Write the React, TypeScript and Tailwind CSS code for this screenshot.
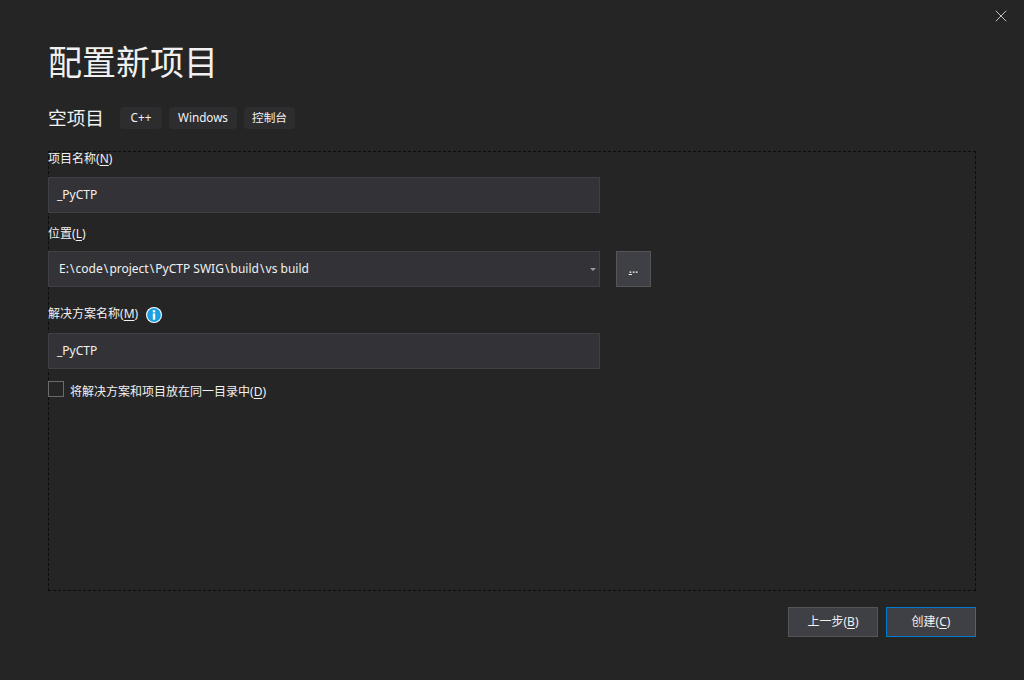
import React from 'react'
import { X } from 'lucide-react'

const FONT = "font-['Noto_Sans','Noto_Sans_CJK_SC',sans-serif]"
const PATH = 'E:\\code\\project\\PyCTP SWIG\\build\\vs build'

function Label({ text, hot }: { text: string; hot: string }) {
  return (
    <span className="block pt-[1px] text-[12px] leading-[14px] text-[#f1f1f1]">
      {text}(<span className="underline underline-offset-2">{hot}</span>)
    </span>
  )
}

function Tag({ children, w }: { children: React.ReactNode; w: string }) {
  return (
    <span className={`flex h-[22px] items-center justify-center rounded-[4px] bg-[#2d2d30] text-[11.7px] text-[#f1f1f1] ${w}`}>
      {children}
    </span>
  )
}

function TextBox({ value }: { value: string }) {
  return (
    <div className="flex h-[36px] w-[552px] items-center border border-[#3f3f46] bg-[#333337] pl-[8px] text-[12px] text-[#f1f1f1]">
      {value}
    </div>
  )
}

function Btn({ children, primary }: { children: React.ReactNode; primary?: boolean }) {
  return (
    <button
      className={`h-[30px] w-[90px] border bg-[#3f3f46] text-[12px] text-[#f1f1f1] ${
        primary ? 'border-[#007acc]' : 'border-[#555555]'
      }`}
    >
      {children}
    </button>
  )
}

export default function App() {
  return (
    <div className={`relative flex h-[680px] w-[1024px] flex-col overflow-hidden bg-[#252526] pl-[48px] pr-[48px] ${FONT}`}>
      <button className="absolute right-[13px] top-[6px] text-[#d0d0d0]">
        <X size={20} strokeWidth={1.1} />
      </button>

      <h1 className="mt-[38px] h-[48px] text-[34px] leading-[48px] font-normal text-[#f1f1f1]">配置新项目</h1>

      <div className="mt-[21px] flex h-[22px] items-center">
        <span className="w-[72px] text-[18.7px] leading-[22px] text-[#f1f1f1]">空项目</span>
        <div className="flex gap-[7px]">
          <Tag w="w-[42px]">C++</Tag>
          <Tag w="w-[68px]">Windows</Tag>
          <Tag w="w-[51px]">控制台</Tag>
        </div>
      </div>

      <div className="mt-[22px] flex h-[440px] flex-col border border-dashed border-[#0c0c0c]">
        <div className="mt-[-1px] ml-[-1px] flex flex-col">
          <div className="h-[26px]">
            <Label text="项目名称" hot="N" />
          </div>
          <TextBox value="_PyCTP" />

          <div className="mt-[13px] h-[25px]">
            <Label text="位置" hot="L" />
          </div>
          <div className="flex items-center">
            <div className="relative flex h-[36px] w-[552px] items-center border border-[#3f3f46] bg-[#333337] pl-[10px] text-[12px] whitespace-pre text-[#f1f1f1]">
              {PATH.split('\\').map((part, i) => (
                <span key={i}>
                  {i > 0 && <span className="px-[1.1px]">{'\\'}</span>}
                  {part}
                </span>
              ))}
              <span className="absolute right-[3px] top-[16px] h-0 w-0 border-x-[3px] border-t-[3px] border-x-transparent border-t-[#999999]" />
            </div>
            <button className="relative ml-[16px] flex h-[36px] w-[35px] items-center justify-center border border-[#555555] bg-[#3f3f46] text-[12px] text-[#f1f1f1]">
              <span className="underline underline-offset-1">.</span>..
            </button>
          </div>

          <div className="mt-[19px] flex h-[27px] items-start gap-[8px]">
            <Label text="解决方案名称" hot="M" />
            <svg width="16" height="16" viewBox="0 0 16 16" className="mt-[1px]">
              <circle cx="8" cy="8" r="8" fill="#ffffff" />
              <circle cx="8" cy="8" r="6.9" fill="#1ba1e2" />
              <rect x="6.8" y="3.2" width="2.4" height="2.2" fill="#ffffff" />
              <rect x="6.8" y="6.5" width="2.4" height="6.2" fill="#ffffff" />
            </svg>
          </div>
          <TextBox value="_PyCTP" />

          <div className="mt-[12px] flex items-start">
            <span className="h-[16px] w-[16px] border border-[#6a6a6a] bg-[#252526]" />
            <span className="mt-[3px] ml-[6px]">
              <Label text="将解决方案和项目放在同一目录中" hot="D" />
            </span>
          </div>
        </div>
      </div>

      <div className="mt-[16px] flex justify-end gap-[8px]">
        <Btn>
          上一步(<span className="underline underline-offset-2">B</span>)
        </Btn>
        <Btn primary>
          创建(<span className="underline underline-offset-2">C</span>)
        </Btn>
      </div>
    </div>
  )
}
